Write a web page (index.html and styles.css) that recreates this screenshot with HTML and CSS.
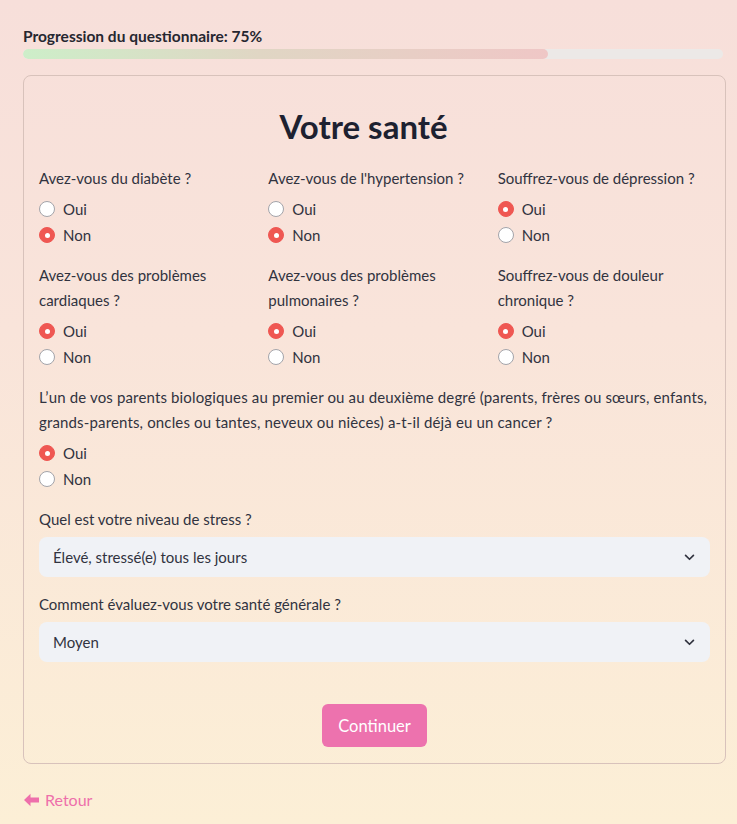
FILE: index.html
```html
<!DOCTYPE html>
<html lang="fr">
<head>
<meta charset="utf-8">
<title>Votre santé</title>
<link rel="stylesheet" href="styles.css">
</head>
<body>
<div class="page">
  <div class="progress-label">Progression du questionnaire: 75%</div>
  <div class="progress-track"><div class="progress-fill" style="width:75%"></div></div>

  <form class="card">
    <h1 class="title">Votre santé</h1>

    <div class="grid3">
      <div class="question">
        <div class="qlabel">Avez-vous du diabète ?</div>
        <div class="option"><span class="radio"></span>Oui</div>
        <div class="option"><span class="radio on"></span>Non</div>
      </div>
      <div class="question">
        <div class="qlabel">Avez-vous de l'hypertension ?</div>
        <div class="option"><span class="radio"></span>Oui</div>
        <div class="option"><span class="radio on"></span>Non</div>
      </div>
      <div class="question">
        <div class="qlabel">Souffrez-vous de dépression ?</div>
        <div class="option"><span class="radio on"></span>Oui</div>
        <div class="option"><span class="radio"></span>Non</div>
      </div>
      <div class="question">
        <div class="qlabel">Avez-vous des problèmes cardiaques ?</div>
        <div class="option"><span class="radio on"></span>Oui</div>
        <div class="option"><span class="radio"></span>Non</div>
      </div>
      <div class="question">
        <div class="qlabel">Avez-vous des problèmes pulmonaires ?</div>
        <div class="option"><span class="radio on"></span>Oui</div>
        <div class="option"><span class="radio"></span>Non</div>
      </div>
      <div class="question">
        <div class="qlabel">Souffrez-vous de douleur chronique ?</div>
        <div class="option"><span class="radio on"></span>Oui</div>
        <div class="option"><span class="radio"></span>Non</div>
      </div>
    </div>

    <div class="question wide">
      <div class="qlabel long">L’un de vos parents biologiques au premier ou au deuxième degré (parents, frères ou sœurs, enfants, grands-parents, oncles ou tantes, neveux ou nièces) a-t-il déjà eu un cancer ?</div>
      <div class="option"><span class="radio on"></span>Oui</div>
      <div class="option"><span class="radio"></span>Non</div>
    </div>

    <div class="question wide">
      <div class="qlabel">Quel est votre niveau de stress ?</div>
      <div class="select"><span>Élevé, stressé(e) tous les jours</span>
        <svg class="chev" viewBox="0 0 12 8" width="11" height="7"><path d="M1.5 1.5 L6 6 L10.5 1.5" fill="none" stroke="#31333f" stroke-width="1.9" stroke-linecap="round" stroke-linejoin="round"/></svg>
      </div>
    </div>

    <div class="question wide">
      <div class="qlabel">Comment évaluez-vous votre santé générale ?</div>
      <div class="select"><span>Moyen</span>
        <svg class="chev" viewBox="0 0 12 8" width="11" height="7"><path d="M1.5 1.5 L6 6 L10.5 1.5" fill="none" stroke="#31333f" stroke-width="1.9" stroke-linecap="round" stroke-linejoin="round"/></svg>
      </div>
    </div>

    <div class="actions"><button type="button" class="btn">Continuer</button></div>
  </form>

  <a class="back" href="#"><svg viewBox="0 0 16 14" width="17" height="14"><path d="M0.5 7 L7 0.8 L7 4.5 L15.5 4.5 L15.5 9.5 L7 9.5 L7 13.2 Z" fill="#ee6fab"/></svg>Retour</a>
</div>
</body>
</html>
```

FILE: styles.css
```css
* { box-sizing: border-box; }
html, body { margin: 0; padding: 0; }
body {
  width: 737px;
  min-height: 824px;
  background: linear-gradient(180deg, #f7dfda 0%, #f9e4da 40%, #fcefd6 100%);
  font-family: "Lato", "Source Sans Pro", "Noto Sans", sans-serif;
  color: #31333f;
  font-size: 15px;
}
.page {
  padding: 26px 11px 0 23px;
  min-height: 824px;
}
.progress-label {
  font-weight: 700;
  font-size: 15.5px;
  line-height: 21px;
  color: #262730;
}
.progress-track {
  margin-top: 2px;
  height: 10px;
  width: 700px;
  background: #ece9e7;
  border-radius: 5px;
  overflow: hidden;
}
.progress-fill {
  height: 100%;
  border-radius: 5px;
  background: linear-gradient(90deg, #cdeec9 0%, #e0d6c4 45%, #efc7c6 100%);
}
.card {
  display: block;
  margin-top: 16px;
  width: 703px;
  border: 1px solid #d8c2bb;
  border-radius: 8px;
  padding: 16px 15px 16px 15px;
}
.title {
  margin: 13px 0 0 0;
  padding-right: 22px;
  text-align: center;
  font-size: 33px;
  line-height: 42px;
  font-weight: 700;
  color: #1d2130;
}
.grid3 {
  margin-top: 19px;
  display: grid;
  grid-template-columns: repeat(3, 1fr);
  column-gap: 17px;
  row-gap: 15px;
}
.question { display: flex; flex-direction: column; }
.qlabel {
  font-size: 15px;
  line-height: 25px;
  margin-bottom: 5px;
  color: #31333f;
}
.qlabel.long { letter-spacing: 0.15px; }
.option {
  display: flex;
  align-items: center;
  height: 26px;
  font-size: 15px;
  color: #31333f;
}
.radio {
  width: 16px;
  height: 16px;
  border-radius: 50%;
  background: #fff;
  border: 1px solid #a3a4aa;
  margin-right: 8px;
  flex: none;
  position: relative;
}
.radio.on {
  background: #ef5752;
  border-color: #ef5752;
}
.radio.on::after {
  content: "";
  position: absolute;
  left: 4.5px; top: 4.5px;
  width: 5px; height: 5px;
  border-radius: 50%;
  background: #fff;
}
.wide { margin-top: 15px; }
.select {
  height: 40px;
  background: #f0f2f6;
  border-radius: 8px;
  display: flex;
  align-items: center;
  justify-content: space-between;
  padding: 0 15px 0 14px;
  font-size: 15px;
  color: #31333f;
}
.actions {
  display: flex;
  justify-content: center;
  margin-top: 42px;
}
.btn {
  font-family: inherit;
  font-size: 16.5px;
  color: #fff;
  background: #ed72ae;
  border: none;
  border-radius: 6px;
  height: 43px;
  padding: 0 16px;
}
.back {
  display: inline-flex;
  align-items: center;
  gap: 5px;
  margin-top: 26px;
  color: #ee6fab;
  text-decoration: none;
  font-size: 16px;
}
```
